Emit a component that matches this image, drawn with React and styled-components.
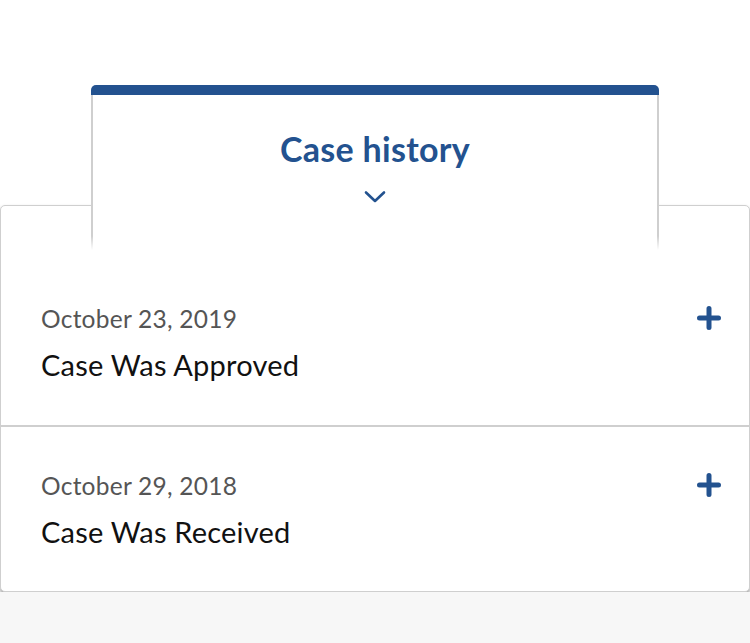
import React from "react";
import styled, { createGlobalStyle } from "styled-components";

const Global = createGlobalStyle`
  html, body { margin: 0; padding: 0; }
  body {
    background: #f7f7f7;
    font-family: Lato, "Noto Sans", sans-serif;
    -webkit-font-smoothing: antialiased;
  }
`;

const BLUE = "#23528f";

const Section = styled.section`
  background: #fff;
  padding-top: 85px;
`;

const Tab = styled.div`
  position: relative;
  z-index: 1;
  width: 568px;
  height: 165px;
  margin: 0 auto -45px;
  box-sizing: border-box;
  border-top: 10px solid ${BLUE};
  border-radius: 5px 5px 0 0;
  background:
    linear-gradient(to bottom, #cfcfcf calc(100% - 14px), rgba(255,255,255,0)) left top / 2px 100% no-repeat,
    linear-gradient(to bottom, #cfcfcf calc(100% - 14px), rgba(255,255,255,0)) right top / 2px 100% no-repeat,
    #fff;
  display: flex;
  flex-direction: column;
  align-items: center;
  padding-top: 34px;
`;

const TabTitle = styled.h2`
  margin: 0;
  font-size: 34px;
  line-height: 40px;
  font-weight: 700;
  color: ${BLUE};
  letter-spacing: 0.3px;
`;

const Chevron = styled.svg`
  margin-top: 21px;
  display: block;
`;

const Card = styled.div`
  background: #fff;
  border: 1px solid #cfcfcf;
  border-radius: 5px;
  box-shadow: 0 3px 4px rgba(0, 0, 0, 0.38);
  padding-top: 54px;
`;

const Row = styled.div`
  display: flex;
  align-items: flex-start;
  justify-content: space-between;
  padding: 43px 28px ${(p) => (p.$last ? 41 : 42)}px 40px;
  & + & {
    border-top: 2px solid #cfcfcf;
  }
`;

const RowText = styled.div`
  display: flex;
  flex-direction: column;
  gap: 12px;
`;

const DateText = styled.div`
  font-size: 24.5px;
  line-height: 32px;
  color: #555;
  letter-spacing: 0.25px;
`;

const Title = styled.div`
  font-size: 29px;
  line-height: 36px;
  color: #111;
  letter-spacing: 0.2px;
`;

const PlusIcon = styled.svg`
  display: block;
  margin-top: 3px;
`;

const Plus = () => (
  <PlusIcon width="24" height="24" viewBox="0 0 24 24">
    <path d="M12 2.5V21.5M2.5 12H21.5" stroke={BLUE} strokeWidth="5" strokeLinecap="round" />
  </PlusIcon>
);

const items = [
  { date: "October 23, 2019", title: "Case Was Approved" },
  { date: "October 29, 2018", title: "Case Was Received" },
];

export default function App() {
  return (
    <>
      <Global />
      <Section>
        <Tab>
          <TabTitle>Case history</TabTitle>
          <Chevron width="22" height="14" viewBox="0 0 22 14">
            <path d="M2 2.5L11 11L20 2.5" fill="none" stroke={BLUE} strokeWidth="2.6" strokeLinecap="round" strokeLinejoin="round" />
          </Chevron>
        </Tab>
        <Card>
          {items.map((it, i) => (
            <Row key={it.date} $last={i === items.length - 1}>
              <RowText>
                <DateText>{it.date}</DateText>
                <Title>{it.title}</Title>
              </RowText>
              <Plus />
            </Row>
          ))}
        </Card>
      </Section>
    </>
  );
}
